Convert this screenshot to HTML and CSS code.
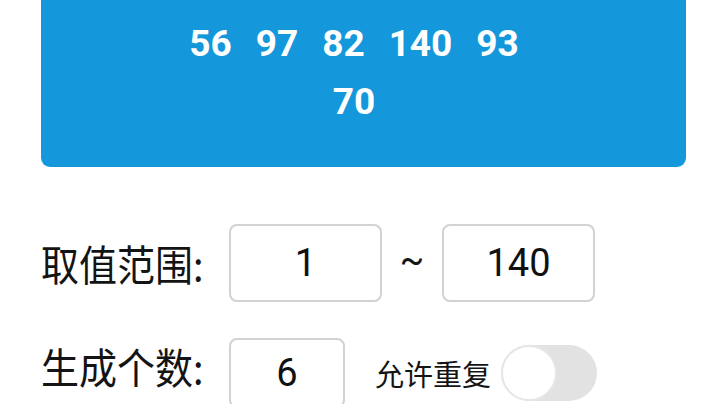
FILE: index.html
```html
<!DOCTYPE html>
<html lang="zh">
<head>
<meta charset="utf-8">
<link rel="stylesheet" href="styles.css">
</head>
<body>
<div class="page">
  <div class="result">
    <div class="nums">
      <span>56</span><span>97</span><span>82</span><span>140</span><span>93</span><span>70</span>
    </div>
  </div>
  <div class="row row-range">
    <span class="label">取值范围:</span>
    <div class="box box-wide">1</div>
    <span class="tilde">~</span>
    <div class="box box-wide">140</div>
  </div>
  <div class="row row-count">
    <span class="label label-count">生成个数:</span>
    <div class="box box-narrow">6</div>
    <span class="repeat">允许重复</span>
    <div class="toggle"><div class="knob"></div></div>
  </div>
</div>
</body>
</html>
```
FILE: styles.css
```css
html, body {
  margin: 0;
  padding: 0;
  background: #ffffff;
  overflow: hidden;
}
body {
  width: 720px;
  height: 404px;
  font-family: Roboto, "Noto Sans CJK SC", sans-serif;
  color: #141414;
}
.page {
  display: flex;
  flex-direction: column;
  padding-left: 41px;
  padding-right: 34px;
}
.result {
  background: #1597db;
  border-radius: 0 0 9px 9px;
  height: 167px;
  box-sizing: border-box;
  padding-top: 15px;
  display: flex;
  justify-content: center;
  align-items: flex-start;
}
.nums {
  width: 350px;
  margin-right: 19px;
  display: flex;
  flex-wrap: wrap;
  justify-content: center;
  align-content: flex-start;
  column-gap: 24px;
  color: #ffffff;
  font-weight: 700;
  font-size: 37px;
  line-height: 58px;
}
.row {
  display: flex;
  align-items: center;
}
.row-range {
  margin-top: 57px;
}
.row-count {
  margin-top: 36px;
}
.label {
  font-family: "Noto Sans CJK SC", sans-serif;
  font-size: 38px;
  line-height: 50px;
  width: 188px;
  display: inline-block;
  transform: scaleY(1.1);
}
.label-count {
  margin-bottom: 14px;
}
.box {
  box-sizing: border-box;
  border: 2px solid #d2d2d2;
  border-radius: 8px;
  display: flex;
  align-items: center;
  justify-content: center;
  font-size: 38px;
  color: #111;
}
.box-wide {
  width: 153px;
  height: 78px;
}
.box-narrow {
  width: 116px;
  height: 70px;
}
.tilde {
  width: 60px;
  text-align: center;
  font-size: 36px;
  padding-bottom: 6px;
}
.repeat {
  font-family: "Noto Sans CJK SC", sans-serif;
  font-size: 29px;
  margin-left: 30px;
  margin-right: 10px;
}
.toggle {
  width: 96px;
  height: 56px;
  border-radius: 28px;
  background: #e2e2e2;
  display: flex;
  align-items: center;
}
.knob {
  box-sizing: border-box;
  width: 56px;
  height: 56px;
  border-radius: 50%;
  background: #ffffff;
  border: 2px solid #e6e6e6;
}
```
